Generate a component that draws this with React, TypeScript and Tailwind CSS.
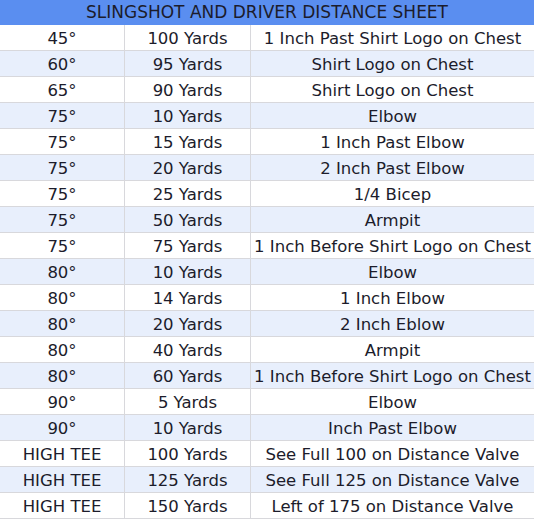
const rows: [string, string, string][] = [
  ["45°", "100 Yards", "1 Inch Past Shirt Logo on Chest"],
  ["60°", "95 Yards", "Shirt Logo on Chest"],
  ["65°", "90 Yards", "Shirt Logo on Chest"],
  ["75°", "10 Yards", "Elbow"],
  ["75°", "15 Yards", "1 Inch Past Elbow"],
  ["75°", "20 Yards", "2 Inch Past Elbow"],
  ["75°", "25 Yards", "1/4 Bicep"],
  ["75°", "50 Yards", "Armpit"],
  ["75°", "75 Yards", "1 Inch Before Shirt Logo on Chest"],
  ["80°", "10 Yards", "Elbow"],
  ["80°", "14 Yards", "1 Inch Elbow"],
  ["80°", "20 Yards", "2 Inch Eblow"],
  ["80°", "40 Yards", "Armpit"],
  ["80°", "60 Yards", "1 Inch Before Shirt Logo on Chest"],
  ["90°", "5 Yards", "Elbow"],
  ["90°", "10 Yards", "Inch Past Elbow"],
  ["HIGH TEE", "100 Yards", "See Full 100 on Distance Valve"],
  ["HIGH TEE", "125 Yards", "See Full 125 on Distance Valve"],
  ["HIGH TEE", "150 Yards", "Left of 175 on Distance Valve"],
];

export default function App() {
  return (
    <div className="w-[534px] bg-white font-['DejaVu_Sans',sans-serif] text-[16.5px] text-[#1c1c2b]">
      <div className="flex h-[25px] items-center justify-center bg-[#5a8ef0] pt-[1px] text-[17px]">
        SLINGSHOT AND DRIVER DISTANCE SHEET
      </div>
      {rows.map(([angle, yards, spot], i) => (
        <div
          key={i}
          className={`grid h-[26px] grid-cols-[125px_126px_1fr] border-b border-[#d8d8dc] ${
            i % 2 === 1 ? "bg-[#e8effc]" : "bg-white"
          }`}
        >
          <div className="flex items-center justify-center border-r border-[#d8d8dc] pt-[2px]">{angle}</div>
          <div className="flex items-center justify-center border-r border-[#d8d8dc] pt-[2px]">{yards}</div>
          <div className="flex items-center justify-center whitespace-nowrap pt-[2px]">{spot}</div>
        </div>
      ))}
    </div>
  );
}
